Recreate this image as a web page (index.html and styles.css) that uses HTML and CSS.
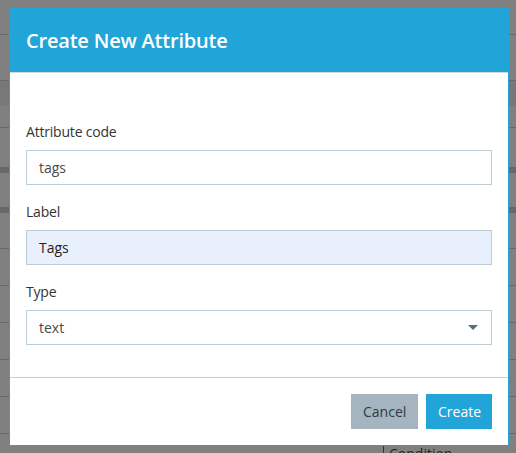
FILE: index.html
```html
<!DOCTYPE html>
<html>
<head>
<meta charset="utf-8">
<link rel="stylesheet" href="styles.css">
</head>
<body>
<div class="page">
  <div class="row r1"></div>
  <div class="row r2"></div>
  <div class="row r3"></div>
  <div class="row r4"></div>
  <div class="row r5"></div>
  <div class="row r6"></div>
  <div class="row r7"></div>
  <div class="row r9"></div>
  <div class="row r9"></div>
  <div class="row r9"></div>
  <div class="row r9"></div>
  <div class="row r9"></div>
  <div class="row last"><span class="cond">Condition</span></div>
</div>
<div class="modal">
  <div class="modal-header">
    <h2 class="title">Create New Attribute</h2>
  </div>
  <div class="modal-body">
    <div class="field">
      <label class="label">Attribute code</label>
      <div class="input">tags</div>
    </div>
    <div class="field">
      <label class="label">Label</label>
      <div class="input filled">Tags</div>
    </div>
    <div class="field">
      <label class="label">Type</label>
      <div class="input select">
        <span>text</span>
        <svg class="caret" width="10" height="5" viewBox="0 0 10 5"><path d="M0 0h10L5 5z" fill="#596c7a"/></svg>
      </div>
    </div>
  </div>
  <div class="modal-footer">
    <button class="btn cancel">Cancel</button>
    <button class="btn create">Create</button>
  </div>
</div>
</body>
</html>
```
FILE: styles.css
```css
html, body {
  margin: 0;
  padding: 0;
}
body {
  background: #808080;
  width: 516px;
  height: 453px;
  overflow: hidden;
  position: relative;
  font-family: "Open Sans", "Noto Sans", sans-serif;
}
.page {
  display: flex;
  flex-direction: column;
}
.row {
  border-bottom: 1px solid #676a6c;
  box-sizing: border-box;
  flex: none;
}
.r1 { height: 35px; }
.r2 { height: 46px; }
.r3 { height: 26px; background: #787878; border-bottom-color: #808080; }
.r4 { height: 21px; }
.r5 { height: 45px; border-bottom: 6px solid #65696c; }
.r6 { height: 40px; border-bottom: 6px solid #65696c; }
.r7 { height: 36px; }
.r9 { height: 37px; }
.last { height: 19px; border-bottom: none; position: relative; }
.cond {
  position: absolute;
  left: 383px;
  top: 11px;
  padding-left: 5px;
  border-left: 1px solid #333;
  color: #262626;
  font-size: 14px;
  line-height: 18px;
}
.modal {
  position: absolute;
  left: 9px;
  top: 8px;
  width: 500px;
  height: 438px;
  box-sizing: border-box;
  background: #fff;
  border: 1px solid #21a4d7;
  display: flex;
  flex-direction: column;
}
.modal-header {
  background: #21a4d7;
  height: 64px;
  box-sizing: border-box;
  border-bottom: 1px solid #cfd8dd;
  display: flex;
  align-items: center;
  padding: 0 16px;
}
.title {
  margin: 0;
  color: #fff;
  font-size: 20px;
  font-weight: 600;
  letter-spacing: -0.2px;
}
.modal-body {
  flex: 1;
  padding: 49px 16px 0;
  display: flex;
  flex-direction: column;
  gap: 17px;
  border-bottom: 1px solid #c1cfd7;
}
.field {
  display: flex;
  flex-direction: column;
  gap: 9px;
}
.label {
  color: #333;
  font-size: 14px;
  line-height: 19px;
  height: 19px;
  letter-spacing: -0.2px;
}
.input {
  height: 35px;
  box-sizing: border-box;
  border: 1px solid #bccbd4;
  padding: 0 12px;
  display: flex;
  align-items: center;
  color: #4a4a4a;
  font-size: 14px;
}
.input.filled {
  background: #e8f0fe;
  color: #222;
}
.select {
  justify-content: space-between;
}
.caret {
  margin-right: 1px;
}
.modal-footer {
  height: 67px;
  box-sizing: border-box;
  padding: 16px 16px 15px;
  display: flex;
  justify-content: flex-end;
  gap: 8px;
}
.btn {
  border: none;
  height: 35px;
  padding: 0 12px;
  font-family: inherit;
  font-size: 14px;
}
.cancel {
  background: #a5b5bf;
  color: #2f3a42;
  width: 67px;
}
.create {
  background: #21a4d7;
  color: #fff;
  width: 66px;
}
```
